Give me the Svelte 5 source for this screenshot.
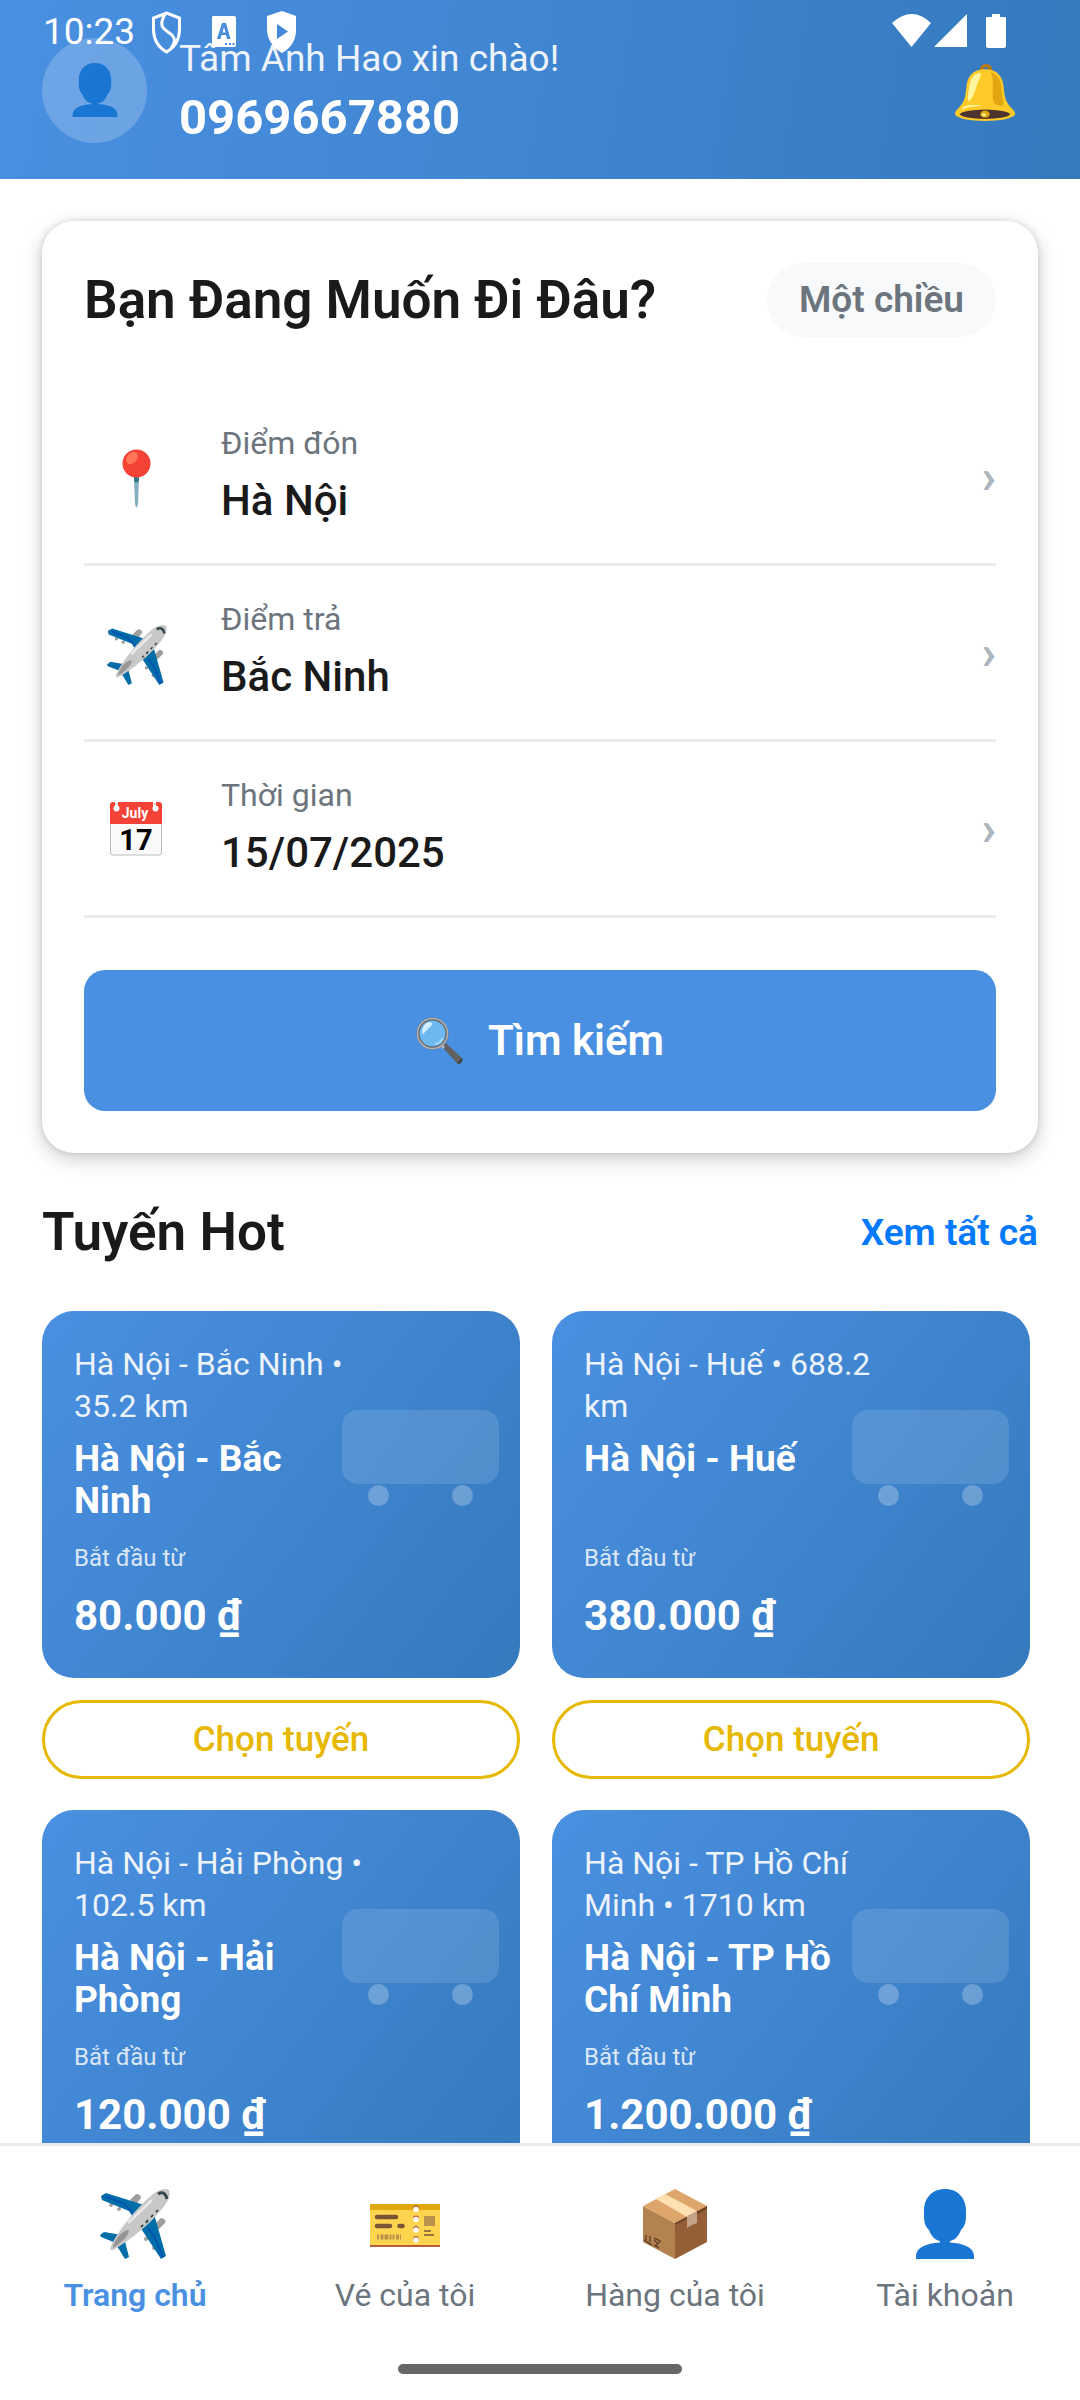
<script lang="ts">
  const fields = [
    { icon: "pin", label: "Điểm đón", value: "Hà Nội" },
    { icon: "plane", label: "Điểm trả", value: "Bắc Ninh" },
    { icon: "calendar", label: "Thời gian", value: "15/07/2025" },
  ];

  const routes = [
    { info: "Hà Nội - Bắc Ninh • 35.2 km", name: "Hà Nội - Bắc Ninh", price: "80.000 ₫" },
    { info: "Hà Nội - Huế • 688.2 km", name: "Hà Nội - Huế", price: "380.000 ₫" },
    { info: "Hà Nội - Hải Phòng • 102.5 km", name: "Hà Nội - Hải Phòng", price: "120.000 ₫" },
    { info: "Hà Nội - TP Hồ Chí Minh • 1710 km", name: "Hà Nội - TP Hồ Chí Minh", price: "1.200.000 ₫" },
  ];

  const tabs = [
    { icon: "plane", label: "Trang chủ" },
    { icon: "ticket", label: "Vé của tôi" },
    { icon: "box", label: "Hàng của tôi" },
    { icon: "user", label: "Tài khoản" },
  ];

  let activeTab = "Trang chủ";
</script>

<svg class="defs" aria-hidden="true">
  <symbol id="user" viewBox="0 0 70 70">
    <path fill="#1976d2" d="M35 0C48 0 56 9 56 22C56 32 56 36 51 41C48 48 45 51 40 52V53.500C54 54 64 59 64 67V70H6V67C6 59 16 54 30 53.500V52C25 51 21 47 19 41C14 36 14 32 14 22C14 9 22 0 35 0Z" />
  </symbol>

  <symbol id="bell" viewBox="0 0 58 56">
    <path d="M24 7C24 -1 36 -1 36 7L33 7C33 3 27 3 27 7Z" fill="#b97a10" />
    <path d="M29 6C41 6 46 13 47 23C48 34 49 38 55 44C58 47 59 49 57 51C53 54 44 56 29 56C14 56 5 54 1 51C-1 49 0 47 3 44C9 38 10 34 11 23C12 13 17 6 29 6Z" fill="#ffca28" />
    <path d="M34 8C43 12 45 19 45 27L47 41C41 42 38 40 37 36C35 27 39 17 34 8Z" fill="#e2a610" />
    <path d="M22 10C27 8 25 13 23 17C20 23 19 34 13 37C11 33 14 25 14 21C15 15 18 11 22 10Z" fill="#fff59d" />
    <path d="M7 43C13 39 22 41 29 41C19 42 12 42 7 45Z" fill="#fff59d" />
    <ellipse cx="29" cy="49.500" rx="24" ry="4.500" fill="#4e342e" />
    <ellipse cx="29" cy="49.500" rx="4.500" ry="3.500" fill="#e2a610" />
    <ellipse cx="28" cy="50" rx="2" ry="1.500" fill="#fff59d" />
  </symbol>

  <symbol id="pin" viewBox="0 0 60 60">
    <path d="M27 27H32L31 55Q29.500 62 28 55Z" fill="#82aec0" />
    <path d="M27 27H32V32Q29 35 27 32Z" fill="#2f7889" />
    <circle cx="29.500" cy="14.500" r="14" fill="#f44336" />
    <ellipse cx="25" cy="9" rx="5" ry="7" transform="rotate(42 25 9)" fill="#ff7555" />
  </symbol>

  <symbol id="plane" viewBox="0 0 70 70">
    <g fill="#9e9e9e">
      <path d="M30 11L36 5Q41 5 41 9L35 17Z" />
      <path d="M54 36L61 29Q67 30 65 34L58 41Z" />
      <circle cx="11" cy="16" r="2" /><circle cx="19" cy="20" r="2" />
      <circle cx="46" cy="50" r="2" /><circle cx="54" cy="59" r="2" />
    </g>
    <path fill="#006ca8" d="M1 7L6 4L44 16L34 30L29 22L2 11ZM0 46L4 43L22 46L16 54L1 48ZM54 25L66 67L61 70L40 38ZM24 49L29 68L25 70L17 57Z" />
    <path d="M5 7L24 15L33 24M48 39L54 47L63 68" fill="none" stroke="#004fb5" stroke-width="1.600" />
    <path d="M69 1C71 6 68 13 62 20C51 34 31 51 13 61Q9 62 11 57C20 38 40 16 53 5C60 0 66 -1 69 1Z" fill="#c8c8c8" />
    <path d="M29 33L51 12" stroke="#e8e8e8" stroke-width="3" stroke-linecap="round" />
    <path d="M13 57C16 49 22 41 29 41C29 47 21 54 13 59Z" fill="#969696" />
    <path d="M58 5Q65 1 67 10" fill="none" stroke="#37474f" stroke-width="3" />
    <path d="M41 38L58 21M46 34L50 29" stroke="#37474f" stroke-width="1.800" stroke-dasharray="3 4" />
  </symbol>

  <symbol id="search" viewBox="0 0 48 48">
    <path d="M27 29L30 26L33 29L46 41Q47 45 43 47Q41 47 40 45L28 32Z" fill="#616161" />
    <path d="M41 46L46 41Q48 44 43 47Z" fill="#424242" />
    <path d="M25 28L28 31" stroke="#b0bec5" stroke-width="3" />
    <circle cx="16.500" cy="16.500" r="14.500" fill="#6eb8f2" stroke="#616161" stroke-width="3" />
    <circle cx="16.500" cy="16.500" r="15" fill="none" stroke="#b5b5b5" stroke-width="1.500" />
    <path d="M6 16Q6 6 14 5Q18 6 15 9L8 16Q6 18 6 16Z" fill="#d5ecfc" />
    <path d="M19 27Q25 26 27 21" fill="none" stroke="#a9dcfb" stroke-width="2" />
  </symbol>

  <symbol id="ticket" viewBox="0 0 70 70">
    <path d="M0 15H70V57H0Z" fill="#ffd54f" />
    <path d="M0 15H70V21H0Z" fill="#e2a610" />
    <path d="M0 56H70V58H0Z" fill="#b55b3a" />
    <g fill="#b55b3a">
      <circle cx="46" cy="19.500" r="3" /><circle cx="46" cy="29.500" r="3" />
      <circle cx="46" cy="40" r="3" /><circle cx="46" cy="50" r="3" />
    </g>
    <g fill="#fff">
      <circle cx="46" cy="20.500" r="2.800" /><circle cx="46" cy="30.500" r="2.800" />
      <circle cx="46" cy="41" r="2.800" /><circle cx="46" cy="51" r="2.800" />
    </g>
    <path d="M7 28H26M7 37H20M29.500 37H32.500" stroke="#795535" stroke-width="4.500" stroke-linecap="round" />
    <path d="M7 48H31" stroke="#b8914a" stroke-width="5" stroke-dasharray="2 1.500 3 1 4 1 2 1" />
    <rect x="54" y="27" width="11" height="10" fill="#b8914a" />
    <path d="M54 42H61M54 46H64" stroke="#795535" stroke-width="1.600" />
  </symbol>

  <symbol id="box" viewBox="0 0 70 70">
    <path d="M3 17L35 34V70L3 53Z" fill="#b3834f" />
    <path d="M67 17L35 34V70L67 53Z" fill="#945f37" />
    <path d="M35 0L67 17L35 34L3 17Z" fill="#dfa66c" />
    <path d="M35 34L67 17V20L35 36Z" fill="#6d4326" />
    <path d="M16 10L25 5L57 22L47 28Z" fill="#ffe0b2" />
    <path d="M47 27L57 22V34L52 36L47 39Z" fill="#c4a387" />
    <path d="M6 46V51M10 47V53M4 51L12 56M14 49L20 52Q19 55 17 54L14 51M17 54V58M14 56L19 59" fill="none" stroke="#69482c" stroke-width="1.500" />
  </symbol>
</svg>

{#snippet icon(name)}
  {#if name === "calendar"}
    <svg class="icon" viewBox="0 2 60 60" aria-hidden="true">
      <rect x="3.500" y="5" width="51" height="51" rx="2" fill="#fafafa" stroke="#bdbdbd" />
      <path d="M3 25V6Q3 3 6 3H8V8A2 2 0 0 0 11 8V3H46V8A2 2 0 0 0 49 8V3H52Q55 3 55 6V25Z" fill="#f44336" />
      <circle cx="9.500" cy="9.500" r="3" fill="#fff" /><circle cx="48.500" cy="9.500" r="3" fill="#fff" />
      <text x="28" y="19" text-anchor="middle" font-size="14" font-weight="700" fill="#fff">July</text>
      <text x="29" y="51" text-anchor="middle" font-size="29" font-weight="700" fill="#000">17</text>
    </svg>
  {:else}
    <svg class="icon" aria-hidden="true"><use href="#{name}" /></svg>
  {/if}
{/snippet}

<div class="screen">
  <div class="status">
    <span class="clock">10:23</span>
    <svg class="notifications" viewBox="0 0 150 44" aria-hidden="true">
      <path d="M15.500 2L28.500 7V19Q28 34 15.500 41Q3 34 2.500 19V7Z" fill="none" stroke="#fff" stroke-width="3" />
      <path d="M14 3C8 14 11 17 17 21C25 26 25 31 20 37" fill="none" stroke="#fff" stroke-width="3" />
      <path fill="#fff" fill-rule="evenodd" d="M62 5H83Q85 5 85 7V34Q85 36 83 36H62Q61 36 61 34V7Q61 5 62 5ZM71 12L66 28H69.500L70.500 24H75L76 28H79.500L75 12ZM73 16L74.500 21.500H71.500ZM74 32V34H76V32ZM78 32V34H80V32ZM81.500 32V34H83.500V32Z" />
      <path fill="#fff" fill-rule="evenodd" d="M131 0L145 5V19Q145 34 131 42Q117 34 116 19V5ZM126 13V28L137 20.500Z" />
    </svg>
    <svg class="signals" viewBox="0 0 116 36" aria-hidden="true">
      <path fill="#fff" d="M0 9Q20 -9 39 9L19.500 33ZM42 33L75 0V33ZM94 4Q94 3 95 3H100V0H108V3H113Q114 3 114 4V32Q114 34 112 34H96Q94 34 94 32Z" />
    </svg>
  </div>

  <header>
    <div class="avatar">{@render icon("user")}</div>
    <div class="greeting">
      <p>Tâm Anh Hao xin chào!</p>
      <strong>0969667880</strong>
    </div>
    <button class="bell" aria-label="Thông báo">{@render icon("bell")}</button>
  </header>

  <main>
    <section class="search-card">
      <div class="card-head">
        <h1>Bạn Đang Muốn Đi Đâu?</h1>
        <button class="trip-type">Một chiều</button>
      </div>
      {#each fields as field}
        <button class="field">
          <span class="field-icon">{@render icon(field.icon)}</span>
          <span class="field-text">
            <span class="field-label">{field.label}</span>
            <span class="field-value">{field.value}</span>
          </span>
          <span class="chevron">›</span>
        </button>
      {/each}
      <button class="search">{@render icon("search")}Tìm kiếm</button>
    </section>

    <div class="section-head">
      <h2>Tuyến Hot</h2>
      <a href="#all">Xem tất cả</a>
    </div>

    <div class="routes">
      {#each routes as route}
        <article>
          <div class="route-card">
            <p class="route-info">{route.info}</p>
            <h3>{route.name}</h3>
            <p class="from">Bắt đầu từ</p>
            <p class="price">{route.price}</p>
            <div class="bus"><i></i><i></i></div>
          </div>
          <button class="choose">Chọn tuyến</button>
        </article>
      {/each}
    </div>
  </main>

  <nav>
    <div class="tabs">
      {#each tabs as tab}
        <button class:active={activeTab === tab.label} on:click={() => (activeTab = tab.label)}>
          {@render icon(tab.icon)}
          {tab.label}
        </button>
      {/each}
    </div>
    <div class="home-bar"></div>
  </nav>
</div>

<style>
  * {
    box-sizing: border-box;
  }
  h1, h2, h3, p {
    margin: 0;
  }
  button {
    background: none;
    border: none;
    padding: 0;
    margin: 0;
    font: inherit;
    color: inherit;
    cursor: pointer;
  }
  .defs {
    position: absolute;
    width: 0;
    height: 0;
  }
  .icon {
    display: block;
    width: 60px;
    height: 60px;
    flex: none;
  }
  .screen {
    position: relative;
    display: flex;
    flex-direction: column;
    height: 100vh;
    background: #fff;
    color: #1a1a1a;
    font-family: Roboto, "Noto Sans", sans-serif;
    overflow: hidden;
  }

  /* system status bar, drawn over the header */
  .status {
    position: absolute;
    top: 0;
    left: 0;
    right: 0;
    display: flex;
    align-items: center;
    height: 62px;
    padding: 0 72px 0 43px;
    color: #fff;
    z-index: 1;
  }
  .clock {
    font-size: 37px;
  }
  .notifications {
    width: 150px;
    height: 44px;
    margin: 3px 0 0 16px;
  }
  .signals {
    width: 116px;
    height: 36px;
    margin: 2px 0 0 auto;
  }

  header {
    display: flex;
    align-items: center;
    padding: 34px 65px 33px 42px;
    background: linear-gradient(99deg, #4a90e2, #357abd);
    color: #fff;
    flex: none;
  }
  .avatar {
    display: grid;
    place-items: center;
    width: 105px;
    height: 105px;
    border-radius: 50%;
    background: rgba(255, 255, 255, 0.2);
  }
  .avatar .icon {
    width: 54px;
    height: 54px;
  }
  .greeting {
    display: flex;
    flex-direction: column;
    flex: 1;
    gap: 5px;
    margin-left: 32px;
  }
  .greeting p {
    font-size: 37px;
    line-height: 50px;
    opacity: 0.9;
  }
  .greeting strong {
    font-size: 49px;
    line-height: 57px;
    font-weight: 700;
  }
  .bell {
    padding-top: 4px;
  }

  main {
    flex: 1;
    min-height: 0;
    padding: 42px 42px 0;
    overflow: hidden;
  }
  .search-card {
    padding: 42px;
    border-radius: 32px;
    background: #fff;
    box-shadow: 0 6px 20px rgba(0, 0, 0, 0.2), 0 0 6px rgba(0, 0, 0, 0.12);
  }
  .card-head {
    display: flex;
    justify-content: space-between;
    align-items: center;
    margin-bottom: 53px;
  }
  h1, h2 {
    font-size: 53px;
    line-height: 62px;
    font-weight: 600;
  }
  .trip-type {
    padding: 12px 32px;
    border-radius: 37px;
    background: #f8f9fa;
    color: #6c757d;
    font-size: 37px;
    line-height: 50px;
    font-weight: 600;
  }
  .field {
    display: flex;
    align-items: center;
    width: 100%;
    height: 176px;
    border-bottom: 3px solid #e9ecef;
    text-align: left;
  }
  .field-icon {
    display: grid;
    place-items: center;
    width: 105px;
    margin-right: 32px;
    padding-top: 4px;
  }
  .field-text {
    display: flex;
    flex-direction: column;
    flex: 1;
    gap: 8px;
    padding-bottom: 2px;
  }
  .field-label {
    font-size: 32px;
    line-height: 42px;
    color: #6c757d;
  }
  .field-value {
    font-size: 42px;
    line-height: 58px;
    font-weight: 500;
  }
  .chevron {
    font-size: 48px;
    font-weight: 700;
    color: #adb5bd;
  }
  .search {
    display: flex;
    align-items: center;
    justify-content: center;
    gap: 24px;
    width: 100%;
    height: 141px;
    margin-top: 52px;
    border-radius: 21px;
    background: #4a90e2;
    color: #fff;
    font-size: 42px;
    font-weight: 600;
  }
  .search .icon {
    width: 48px;
    height: 48px;
  }

  .section-head {
    display: flex;
    justify-content: space-between;
    align-items: center;
    margin: 48px 0;
  }
  .section-head a {
    color: #007aff;
    font-size: 37px;
    font-weight: 600;
    text-decoration: none;
  }

  .routes {
    display: grid;
    grid-template-columns: 48% 48%;
    gap: 31px 32px;
  }
  .route-card {
    position: relative;
    display: flex;
    flex-direction: column;
    height: 367px;
    padding: 32px 32px 28px;
    border-radius: 32px;
    background: linear-gradient(128deg, #4a90e2, #357abd);
    color: #fff;
  }
  .route-info {
    max-width: 70%;
    margin-bottom: 11px;
    font-size: 32px;
    line-height: 42px;
    opacity: 0.9;
  }
  h3 {
    max-width: 65%;
    min-height: 84px;
    font-size: 37px;
    line-height: 42px;
    font-weight: 700;
  }
  .from {
    margin-top: 18px;
    font-size: 24px;
    line-height: 36px;
    opacity: 0.8;
  }
  .price {
    margin-top: 11px;
    font-size: 42px;
    line-height: 58px;
    font-weight: 700;
  }
  .bus {
    position: absolute;
    top: 99px;
    right: 21px;
    display: flex;
    justify-content: space-between;
    align-items: flex-end;
    width: 157px;
    height: 74px;
    padding: 0 26px;
    border-radius: 16px;
    background: rgba(255, 255, 255, 0.12);
  }
  .bus i {
    width: 21px;
    height: 21px;
    margin-bottom: -22px;
    border-radius: 50%;
    background: rgba(255, 255, 255, 0.25);
  }
  .choose {
    width: 100%;
    height: 79px;
    margin-top: 22px;
    border: 3px solid #e6b800;
    border-radius: 40px;
    color: #e6b800;
    font-size: 35px;
    font-weight: 500;
  }

  nav {
    flex: none;
    border-top: 3px solid #e9ecef;
    background: #fff;
  }
  .tabs {
    display: flex;
    padding: 43px 0 42px;
  }
  .tabs button {
    flex: 1;
    display: flex;
    flex-direction: column;
    align-items: center;
    gap: 15px;
    color: #6c757d;
    font-size: 32px;
    line-height: 42px;
  }
  .tabs .active {
    color: #4a90e2;
    font-weight: 600;
  }
  .tabs .icon {
    width: 70px;
    height: 70px;
  }
  .home-bar {
    width: 284px;
    height: 10px;
    margin: 6px auto 26px;
    border-radius: 5px;
    background: #666;
  }
</style>
